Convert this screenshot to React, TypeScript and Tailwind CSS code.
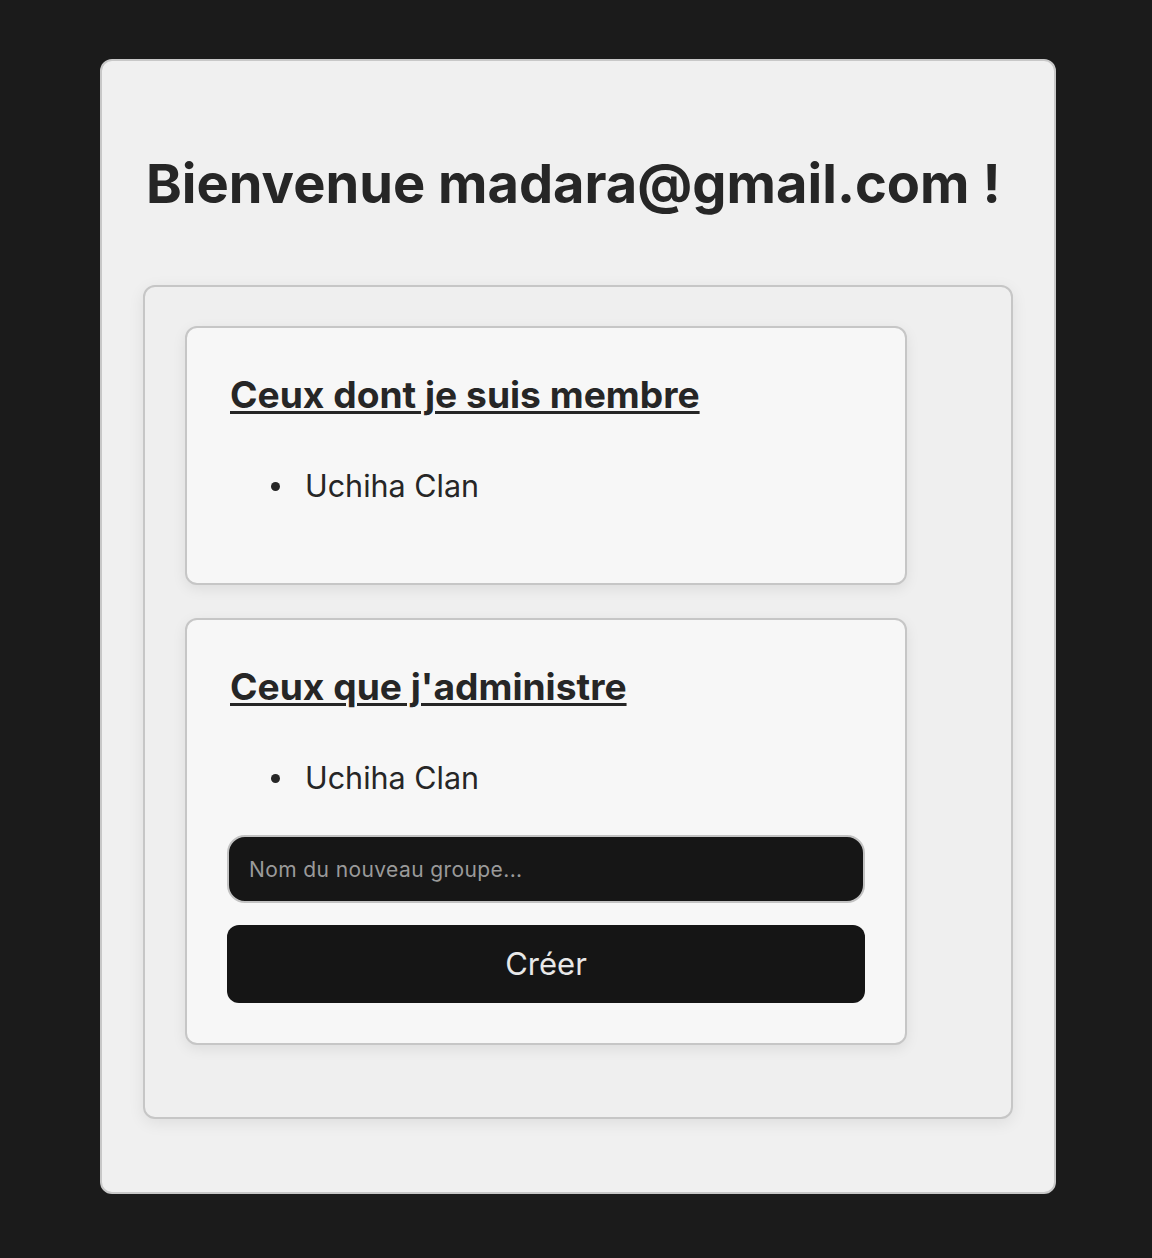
import React from "react";

function GroupCard({ title, children }: { title: string; children?: React.ReactNode }) {
  return (
    <section className="w-[722px] rounded-xl border-2 border-[#c6c6c6] bg-[#f7f7f7] px-[40px] pt-[44px] pb-[40px] shadow-[0_4px_14px_rgba(0,0,0,0.08)]">
      <h2 className="ml-[3px] text-[37.2px] font-bold leading-[46px] text-[#262626] underline decoration-[2.5px] underline-offset-[3px]">
        {title}
      </h2>
      <ul className="mt-[48px] pl-[44px] text-[30.5px] leading-[40px] text-[#262626]">
        <li className="flex items-center gap-[25px]">
          <span className="h-[9px] w-[9px] rounded-full bg-[#262626]" />
          <span>Uchiha Clan</span>
        </li>
      </ul>
      {children}
    </section>
  );
}

export default function App() {
  return (
    <div
      className="min-h-[1258px] bg-[#1b1b1b] pt-[59px]"
      style={{ fontFamily: "Inter, 'Noto Sans', sans-serif" }}
    >
      <main className="ml-[100px] w-[956px] rounded-xl border-2 border-[#c8c8c8] bg-[#f0f0f0] px-[41px] pt-[90px] pb-[73px]">
        <h1 className="ml-[3px] text-[54.2px] font-bold leading-[64px] text-[#262626]">
          Bienvenue madara@gmail.com !
        </h1>
        <div className="mt-[70px] flex flex-col gap-[33px] rounded-xl border-2 border-[#c6c6c6] bg-[#efefef] px-[40px] pt-[39px] pb-[72px] shadow-[0_4px_16px_rgba(0,0,0,0.08)]">
          <GroupCard title="Ceux dont je suis membre">
            <div className="h-[37px]" />
          </GroupCard>
          <GroupCard title="Ceux que j'administre">
            <div className="mt-[37px] flex flex-col gap-[22px]">
              <input
                placeholder="Nom du nouveau groupe..."
                className="h-[68px] w-full rounded-[18px] border-2 border-[#c2c2c2] bg-[#161616] px-[20px] text-[21px] tracking-[0.4px] text-[#e6e6e6] outline-none placeholder:text-[#9a9a9a]"
              />
              <button className="h-[78px] w-full rounded-xl bg-[#151515] text-[31px] text-[#e8e8e8]">
                Créer
              </button>
            </div>
          </GroupCard>
        </div>
      </main>
    </div>
  );
}
